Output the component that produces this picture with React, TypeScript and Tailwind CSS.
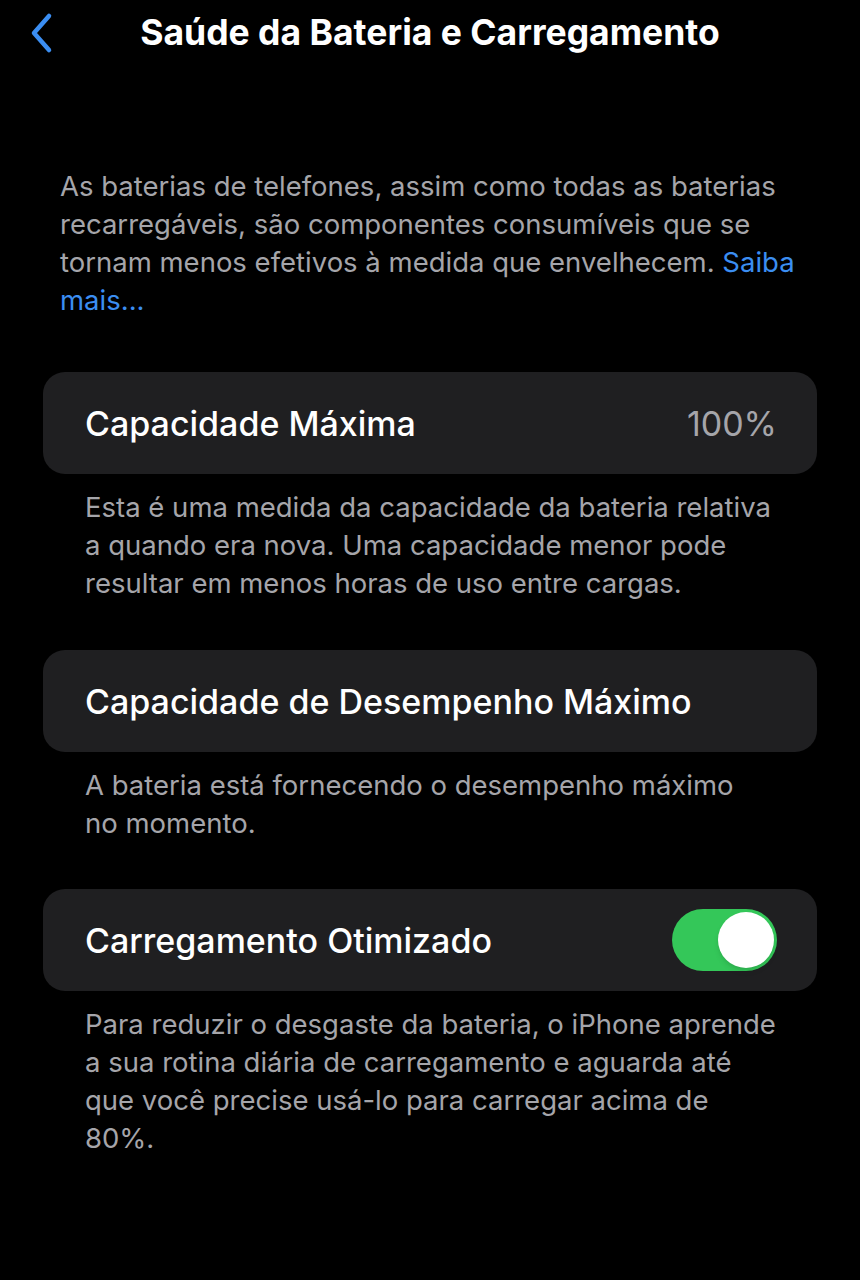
import React from 'react';

const font = { fontFamily: 'Inter, "Liberation Sans", sans-serif' };

function Card({ children }: { children: React.ReactNode }) {
  return (
    <div className="mx-[43px] h-[102px] rounded-[22px] bg-[#1f1f21] pl-[42px] pr-[40px] flex items-center justify-between">
      {children}
    </div>
  );
}

function Footer({ children }: { children: React.ReactNode }) {
  return (
    <div className="px-[85px] pt-[14px] text-[27.5px] leading-[38px] text-[#a5a5aa] whitespace-nowrap">
      {children}
    </div>
  );
}

export default function App() {
  return (
    <div className="w-[860px] h-[1280px] bg-black text-white overflow-hidden" style={font}>
      {/* nav */}
      <div className="relative h-[66px] flex items-center justify-center">
        <svg className="absolute left-[27px] top-[12px]" width="28" height="42" viewBox="0 0 28 42">
          <path d="M22 4 L7 21 L22 38" fill="none" stroke="#3b8ef2" strokeWidth="4.5" strokeLinecap="round" strokeLinejoin="round" />
        </svg>
        <div className="text-[35.5px] font-bold text-white">Saúde da Bateria e Carregamento</div>
      </div>

      <div className="px-[60px] pt-[101px] text-[27.5px] leading-[38px] text-[#a5a5aa] whitespace-nowrap">
        As baterias de telefones, assim como todas as baterias
        <br />
        recarregáveis, são componentes consumíveis que se
        <br />
        tornam menos efetivos à medida que envelhecem. <span className="text-[#3b8ef2]">Saiba</span>
        <br />
        <span className="text-[#3b8ef2]">mais...</span>
      </div>

      <div className="mt-[53px]">
        <Card>
          <span className="text-[34px] font-medium">Capacidade Máxima</span>
          <span className="text-[34px] text-[#a5a5aa]">100%</span>
        </Card>
        <Footer>
          Esta é uma medida da capacidade da bateria relativa
          <br />
          a quando era nova. Uma capacidade menor pode
          <br />
          resultar em menos horas de uso entre cargas.
        </Footer>
      </div>

      <div className="mt-[48px]">
        <Card>
          <span className="text-[34px] font-medium">Capacidade de Desempenho Máximo</span>
        </Card>
        <Footer>
          A bateria está fornecendo o desempenho máximo
          <br />
          no momento.
        </Footer>
      </div>

      <div className="mt-[47px]">
        <Card>
          <span className="text-[34px] font-medium">Carregamento Otimizado</span>
          <div className="w-[105px] h-[62px] rounded-full bg-[#34c759] flex items-center justify-end pr-[3px]">
            <div className="w-[56px] h-[56px] rounded-full bg-white shadow-md" />
          </div>
        </Card>
        <Footer>
          Para reduzir o desgaste da bateria, o iPhone aprende
          <br />
          a sua rotina diária de carregamento e aguarda até
          <br />
          que você precise usá-lo para carregar acima de
          <br />
          80%.
        </Footer>
      </div>
    </div>
  );
}
